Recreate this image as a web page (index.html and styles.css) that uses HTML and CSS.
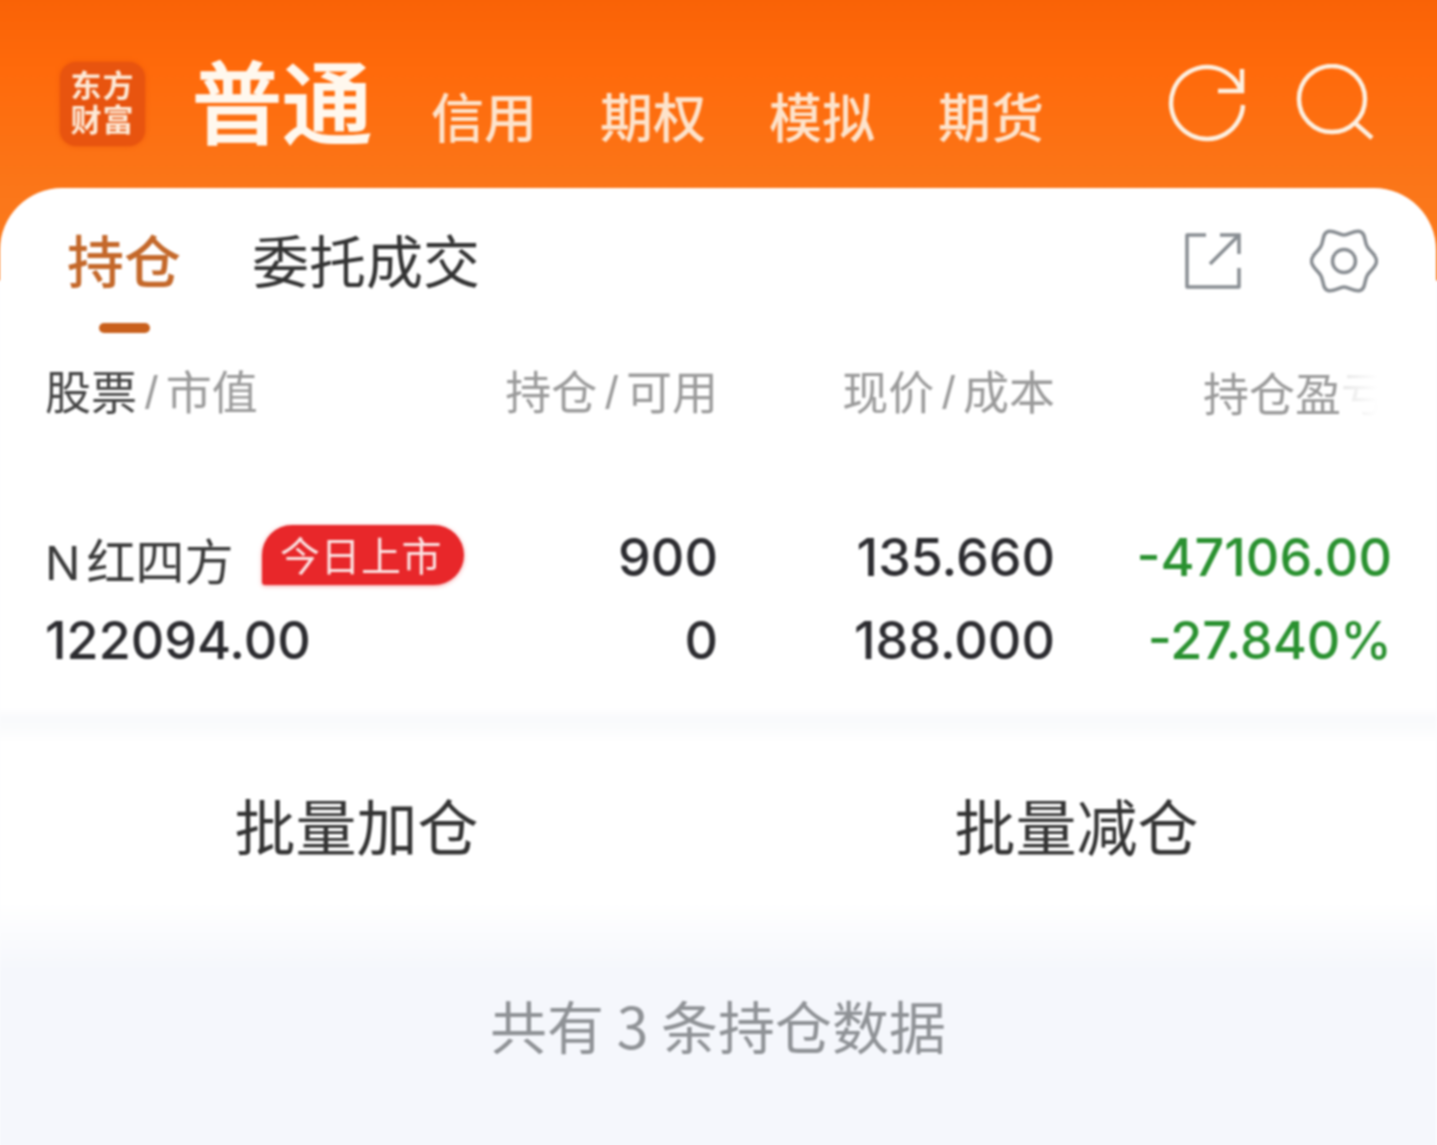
FILE: index.html
```html
<!DOCTYPE html>
<html lang="zh-CN">
<head>
<meta charset="utf-8">
<title>持仓</title>
<link rel="stylesheet" href="styles.css">
</head>
<body>
<div class="page">
  <header class="topbar">
    <div class="logo"><span>东方</span><span>财富</span></div>
    <nav class="accounts">
      <span class="account account-active">普通</span>
      <span class="account">信用</span>
      <span class="account">期权</span>
      <span class="account">模拟</span>
      <span class="account">期货</span>
    </nav>
    <div class="top-icons">
      <svg class="top-icon" viewBox="0 0 80 80" fill="none" stroke="#fdf0e0" stroke-width="4.5">
        <path d="M75 41A36 36 0 1 1 73 27"/>
        <path d="M74 5V27H50"/>
      </svg>
      <svg class="top-icon" viewBox="0 0 80 80" fill="none" stroke="#fdf0e0" stroke-width="4.5">
        <circle cx="36" cy="35" r="33"/>
        <path d="M59 59L76 74"/>
      </svg>
    </div>
  </header>

  <main class="card">
    <div class="tabs">
      <div class="tab tab-active">持仓</div>
      <div class="tab">委托成交</div>
      <div class="tab-icons">
        <svg class="share-icon" viewBox="0 0 58 58" fill="none" stroke="#888d92" stroke-width="3.5" stroke-linejoin="round">
          <path d="M22 3H3V55H55V36"/>
          <path d="M26 32L54 4"/>
          <path d="M36 3H55V22" stroke-linejoin="miter"/>
        </svg>
        <svg class="gear-icon" viewBox="0 0 68 66" fill="none" stroke="#888d92" stroke-width="3.5">
          <path d="M34 7C39 7 44 2 50 3.500C56 5 54 14 57.500 19C60.500 24 66.500 27 66.500 33C66.500 39 60.500 42 57.500 47C54 52 56 61 50 62.500C44 64 39 59 34 59C29 59 24 64 18 62.500C12 61 14 52 10.500 47C7.500 42 1.500 39 1.500 33C1.500 27 7.500 24 10.500 19C14 14 12 5 18 3.500C24 2 29 7 34 7Z"/>
          <circle cx="34" cy="33" r="11.5"/>
        </svg>
      </div>
    </div>

    <div class="grid heads">
      <div class="head"><span class="head-strong">股票</span><i class="slash">/</i>市值</div>
      <div class="head num">持仓<i class="slash">/</i>可用</div>
      <div class="head num">现价<i class="slash">/</i>成本</div>
      <div class="head num">持仓盈<span class="head-fade">亏</span></div>
    </div>

    <div class="grid row">
      <div class="name-line"><span class="name"><span class="name-latin">N</span>红四方</span><span class="badge">今日上市</span></div>
      <div class="val num">900</div>
      <div class="val num">135.660</div>
      <div class="val num loss">-47106.00</div>
      <div class="val">122094.00</div>
      <div class="val num">0</div>
      <div class="val num">188.000</div>
      <div class="val num loss">-27.840%</div>
    </div>

    <div class="actions">
      <div class="action">批量加仓</div>
      <div class="action">批量减仓</div>
    </div>

    <footer class="summary">共有 3 条持仓数据</footer>
  </main>
</div>
</body>
</html>
```

FILE: styles.css
```css
* { box-sizing: border-box; }

html, body {
  margin: 0;
  padding: 0;
  overflow: hidden;
  background: #f6f8fc;
}

body {
  font-family: "Noto Sans CJK SC", "Noto Sans", sans-serif;
}

/* Extends 4px past the window so the soft focus has no visible edge. */
.page {
  width: 1445px;
  height: 1153px;
  margin: -4px;
  padding: 4px 4px 0;
  overflow: hidden;
  background: linear-gradient(180deg, #f96206 0, #ff6a0b 74px, #fb7619 192px, #fb7c20 284px, #fbfcfe 285px);
  filter: blur(0.8px);
}

.topbar {
  height: 188px;
  display: flex;
  align-items: flex-start;
  padding: 62px 60px 0 60px;
}

.logo {
  width: 85px;
  height: 84px;
  padding-bottom: 6px;
  border-radius: 16px;
  background: #e8540f;
  box-shadow: 0 0 5px rgba(230, 80, 10, .7);
  color: #fde9d6;
  font-weight: 700;
  font-size: 31px;
  line-height: 34px;
  letter-spacing: 1px;
  display: flex;
  flex-direction: column;
  align-items: center;
  justify-content: center;
}

.accounts {
  display: flex;
  align-items: flex-end;
  gap: 63px;
  margin-left: 47px;
  height: 84px;
}

.account {
  font-size: 53px;
  font-weight: 500;
  line-height: 62px;
  color: #fde3cb;
  white-space: nowrap;
}

.account-active {
  font-size: 90px;
  line-height: 100px;
  font-weight: 500;
  -webkit-text-stroke: 1.5px #fff8ee;
  color: #fff8ee;
  margin-right: -4px;
  margin-bottom: -2px;
}

.top-icons {
  margin: 2px 1px 0 auto;
  display: flex;
  gap: 48px;
}

.top-icon {
  width: 80px;
  height: 80px;
}

.card {
  height: 961px;
  margin-right: 1px;
  border-radius: 62px 62px 0 0;
  background: #fff;
  display: flex;
  flex-direction: column;
}

.tabs {
  height: 146px;
  display: flex;
  align-items: flex-start;
  padding: 28px 58px 0 67px;
}

.tab {
  font-size: 57px;
  line-height: 84px;
  color: #333;
  margin-right: 71px;
  position: relative;
  height: 114px;
}

.tab-active {
  color: #c4682a;
  font-weight: 500;
}

.tab-active::after {
  content: "";
  position: absolute;
  left: 32px;
  bottom: -3px;
  width: 51px;
  height: 10px;
  border-radius: 5px;
  background: #c9601c;
}

.tab-icons {
  margin: 3px 0 0 auto;
  display: flex;
  align-items: center;
  gap: 68px;
  height: 84px;
}

.share-icon {
  width: 58px;
  height: 58px;
}

.gear-icon {
  width: 68px;
  height: 66px;
}

.grid {
  display: grid;
  grid-template-columns: 336px 337px 337px 337px;
  padding-left: 45px;
}

.heads {
  height: 74px;
  margin-top: 20px;
  align-items: center;
}

.head {
  font-size: 46px;
  line-height: 60px;
  color: #9a9a9a;
  white-space: nowrap;
}

.head-strong {
  color: #444;
}

.slash {
  font-style: normal;
  margin: 0 8px;
  font-family: "Liberation Sans", sans-serif;
}

.head-fade {
  background: linear-gradient(90deg, #e6e6e6, #fff 80%);
  -webkit-background-clip: text;
  background-clip: text;
  color: transparent;
  margin-right: 5px;
}

.num {
  text-align: right;
}

.row {
  margin-top: 94px;
  row-gap: 11px;
  grid-auto-rows: 72px;
  align-items: center;
}

.val {
  font-family: Inter, "Liberation Sans", sans-serif;
  font-size: 52px;
  font-weight: 500;
  line-height: 72px;
  color: #2c2c30;
}

.loss {
  color: #2a9130;
}

.name-line {
  display: flex;
  align-items: center;
  white-space: nowrap;
}

.name {
  flex: none;
  width: 217px;
  font-size: 49px;
  color: #3a3a3a;
}

.name-latin {
  font-family: Inter, "Liberation Sans", sans-serif;
  font-size: 47px;
  margin-right: 6px;
}

.badge {
  flex: none;
  width: 202px;
  height: 60px;
  margin-top: -6px;
  padding-right: 4px;
  border-radius: 30px 30px 30px 3px;
  background: #e8272a;
  box-shadow: 0 1px 4px rgba(232, 39, 42, .45);
  color: #fbe3e3;
  font-size: 40px;
  letter-spacing: .5px;
  line-height: 58px;
  text-align: center;
}

.actions {
  margin-top: 31px;
  height: 195px;
  padding-top: 72px;
  display: grid;
  grid-template-columns: 713px 1fr;
  column-gap: 4px;
  background: linear-gradient(180deg, #fff 0, #f9fafc 10px, #fafbfc 18px, #fff 34px);
}

.action {
  font-size: 61px;
  line-height: 90px;
  text-align: center;
  color: #333;
}

.summary {
  flex: 1;
  padding-top: 76px;
  text-align: center;
  font-size: 57px;
  line-height: 90px;
  color: #8f9296;
  background: linear-gradient(180deg, #fff 0, #f5f7fc 70px);
}
```
